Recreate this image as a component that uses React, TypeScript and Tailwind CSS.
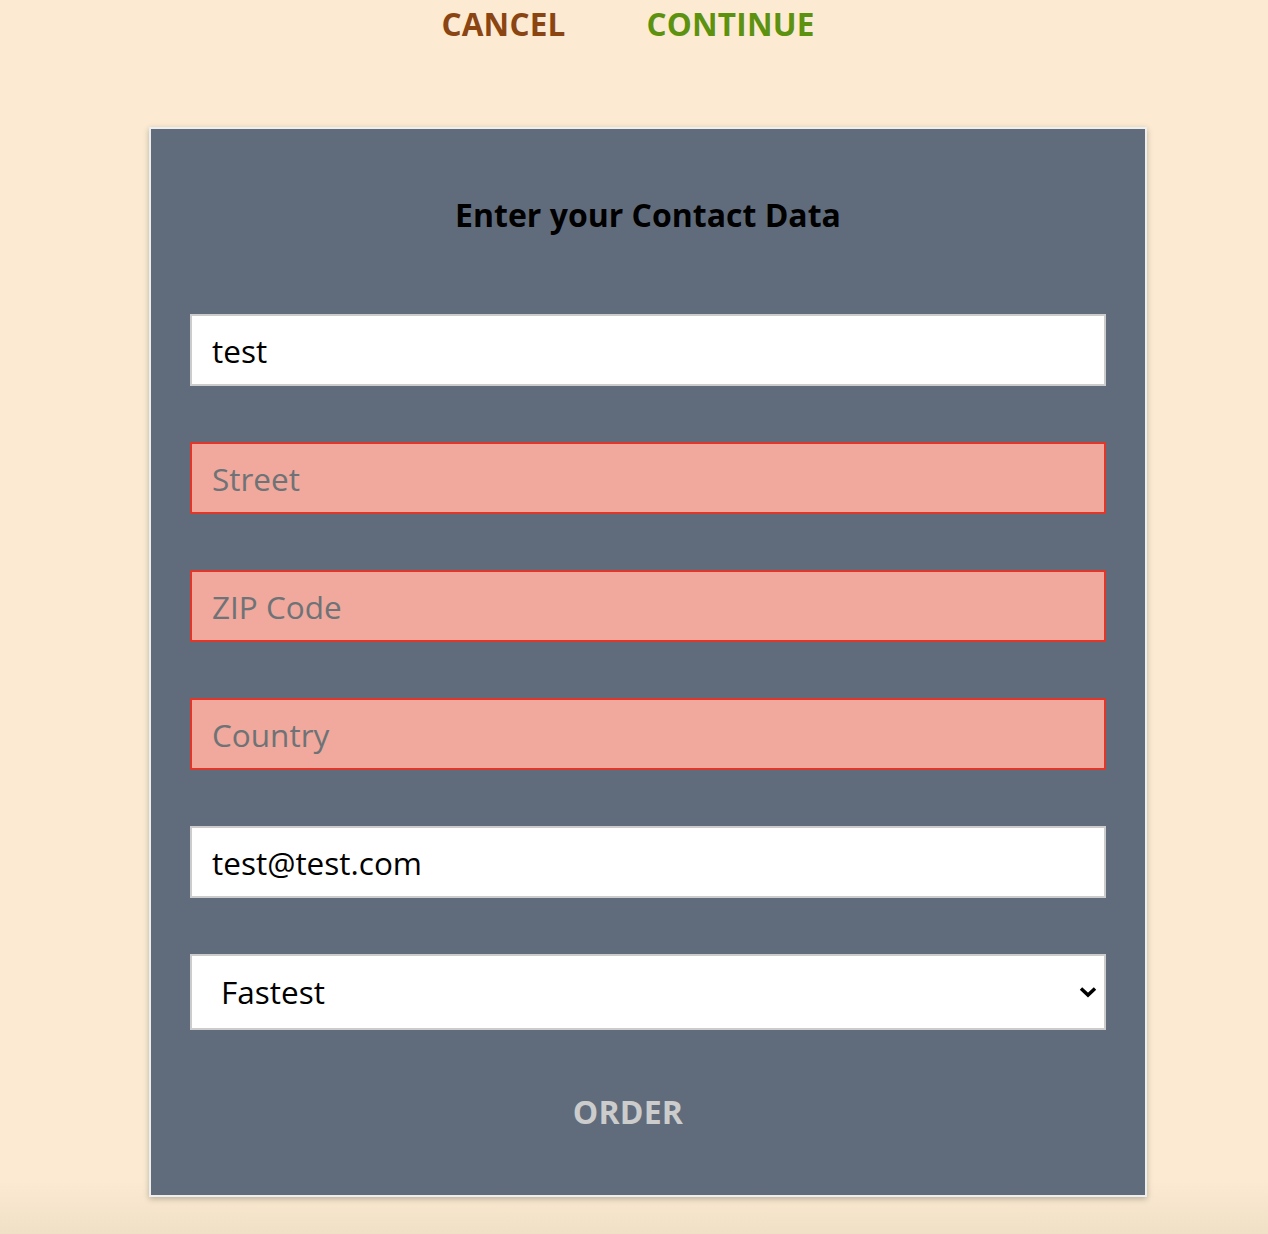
import { FC } from "react";

const fields = [
  { value: "test", placeholder: "Name", invalid: false },
  { value: "", placeholder: "Street", invalid: true },
  { value: "", placeholder: "ZIP Code", invalid: true },
  { value: "", placeholder: "Country", invalid: true },
  { value: "test@test.com", placeholder: "E-Mail", invalid: false },
];

const App: FC = () => {
  return (
    <div
      className="min-h-[1234px] w-full bg-[linear-gradient(to_bottom,#fcebd2_0px,#fcebd2_1180px,#f0e0c6_1234px)] overflow-hidden"
      style={{ fontFamily: '"Open Sans", "Noto Sans", sans-serif' }}
    >
      {/* top controls */}
      <div className="flex justify-center items-center h-[48px] pr-[12px] gap-[81px]">
        <button className="text-[31.5px] font-bold leading-[40px] text-[#8b4513] tracking-[0.2px]">
          CANCEL
        </button>
        <button className="text-[31.5px] font-bold leading-[40px] text-[#5c9210] tracking-[0.2px]">
          CONTINUE
        </button>
      </div>

      <div className="ml-[149px] mt-[79px] w-[998px] border-2 border-[#eeeeee] bg-[#606c7c] shadow-[0_2px_6px_rgba(0,0,0,0.25)] px-[39px] pt-[64px] pb-[63px]">
        <h4 className="text-center text-[32px] font-bold leading-[44px] text-black">
          Enter your Contact Data
        </h4>

        <form className="mt-[77px] flex flex-col gap-[56px]">
          {fields.map((f) => (
            <input
              key={f.placeholder}
              type="text"
              defaultValue={f.value}
              placeholder={f.placeholder}
              className={
                f.invalid
                  ? "h-[72px] w-full border-2 border-[#e1372b] bg-[#f0a99c] px-[20px] text-[31.5px] text-black outline-none placeholder:text-[#6e7377]"
                  : "h-[72px] w-full border-2 border-[#cccccc] bg-white px-[20px] text-[31.5px] text-black outline-none placeholder:text-[#6e7377]"
              }
            />
          ))}

          <div className="relative">
            <select
              defaultValue="fastest"
              className="h-[76px] w-full appearance-none border-2 border-[#cccccc] bg-white pl-[29px] text-[31.5px] text-black outline-none"
            >
              <option value="fastest">Fastest</option>
              <option value="cheapest">Cheapest</option>
            </select>
            <svg
              className="pointer-events-none absolute right-[8px] top-[30px] h-[16px] w-[20px]"
              viewBox="0 0 20 16"
              fill="none"
            >
              <path d="M3 4.5 L10 11 L17 4.5" stroke="black" strokeWidth="3.5" />
            </svg>
          </div>
        </form>

        <div className="mt-[62px] flex justify-center pr-[40px]">
          <button className="text-[32px] font-bold leading-[40px] text-[#cccccc] tracking-[0.2px]">
            ORDER
          </button>
        </div>
      </div>
    </div>
  );
};

export default App;
